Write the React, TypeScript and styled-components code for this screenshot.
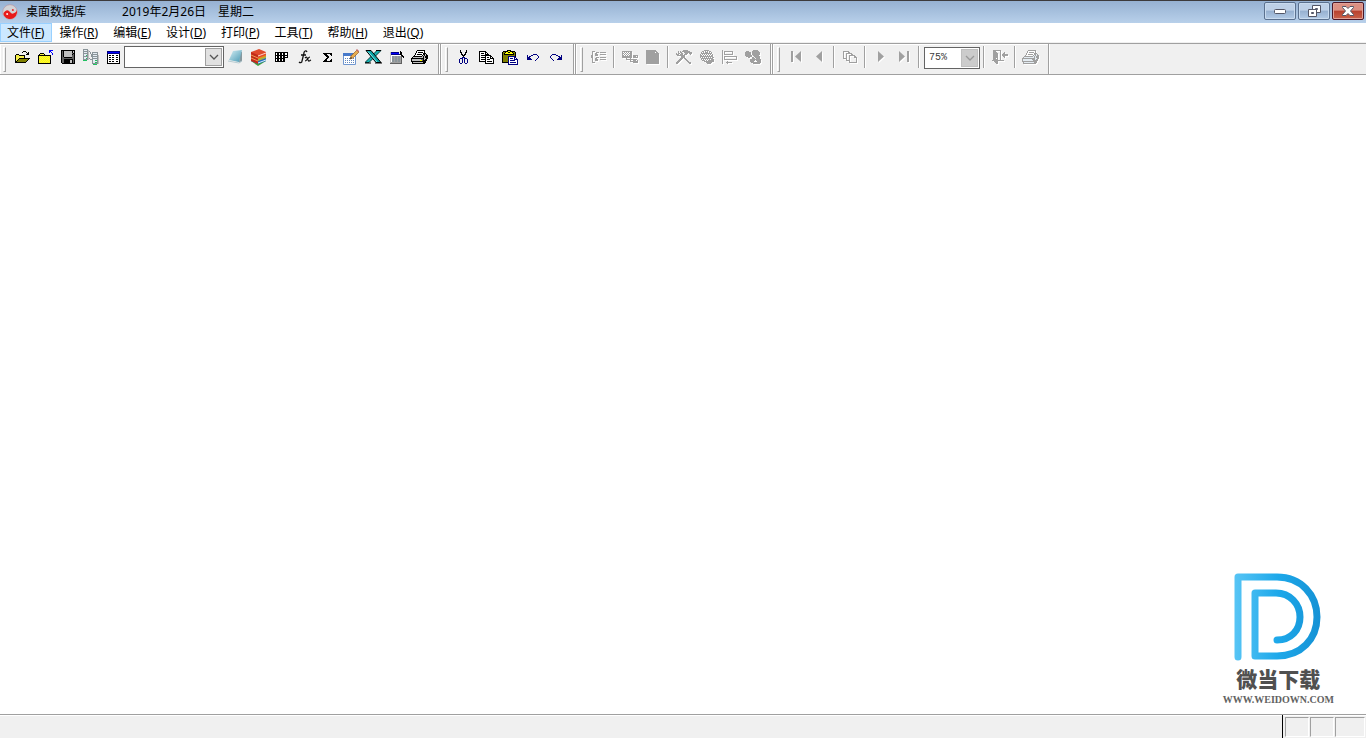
import React from "react";
import styled, { createGlobalStyle, css } from "styled-components";

const GlobalStyle = createGlobalStyle`
  *, *::before, *::after { box-sizing: border-box; }
  body {
    margin: 0;
    background: #fff;
    color: #000;
    font: 12px/18px "Noto Sans", "Noto Sans CJK SC", sans-serif;
  }
  button, select, input { font: inherit; color: inherit; margin: 0; padding: 0; }
`;

const Window = styled.div`
  display: flex;
  flex-direction: column;
  min-height: 100vh;
`;

const TitleBar = styled.header`
  display: flex;
  align-items: flex-start;
  height: 23px;
  padding: 1px 2px 0;
  border-top: 1px solid #3c3a3c;
  background: linear-gradient(#96b1d2, #b8d0ea);
`;

const Title = styled.h1`
  display: flex;
  flex: 1;
  gap: 12px;
  margin: 0;
  padding-left: 8px;
  font-size: 12px;
  font-weight: 400;
  line-height: 19px;
`;

const AppName = styled.span`
  margin-right: 24px;
`;

const WindowButtons = styled.div`
  display: flex;
  gap: 2px;
`;

const WindowButton = styled.button<{ $danger?: boolean }>`
  display: grid;
  place-items: center;
  width: 32px;
  height: 18px;
  border: 1px solid ${(p) => (p.$danger ? "#4c1626" : "#5b718f")};
  border-radius: 2px;
  box-shadow: inset 0 0 0 1px ${(p) => (p.$danger ? "#e0a198" : "#c9dbef")};
  background: ${(p) =>
    p.$danger
      ? "linear-gradient(#dc9083 0 45%, #b8412e 50%, #c9624a)"
      : "linear-gradient(#bdd0e7 0 45%, #96b0d0 50%, #b3cbe6)"};
`;

const MenuBar = styled.nav`
  display: flex;
  height: 20px;
  background: #fff;
  border-bottom: 1px solid #f0f0f0;
`;

const MenuItem = styled.button<{ $active?: boolean }>`
  height: 19px;
  padding: 0 7px 0 6px;
  border: 1px solid ${(p) => (p.$active ? "#99d1ff" : "transparent")};
  background: ${(p) => (p.$active ? "#cce8ff" : "transparent")};
  line-height: 18px;
  white-space: nowrap;
`;

const ToolBars = styled.div`
  display: flex;
  gap: 1px;
  height: 32px;
  border-top: 1px solid #a0a0a0;
  border-bottom: 1px solid #a0a0a0;
  background: #f0f0f0;
`;

const ToolGroup = styled.div<{ $first?: boolean }>`
  display: flex;
  align-items: flex-start;
  padding: ${(p) => (p.$first ? "2px 7px 0 3px" : "2px 6px 0 4px")};
  border: solid #a0a0a0;
  border-width: 0 1px 0 ${(p) => (p.$first ? "0" : "1px")};
  box-shadow: inset 1px 1px 0 #fff, 1px 0 0 #fff;
`;

const Grip = styled.span`
  width: 3px;
  height: 25px;
  margin: 1px 4px 0 0;
  border: 1px solid;
  border-color: #fff #a0a0a0 #a0a0a0 #fff;
`;

const Separator = styled.span`
  width: 2px;
  height: 22px;
  margin: 0 3px;
  border-left: 1px solid #a0a0a0;
  border-right: 1px solid #fff;
`;

const ToolButton = styled.button`
  display: grid;
  place-items: center;
  width: 23px;
  height: 22px;
  border: 0;
  background: none;
  &:disabled svg {
    filter: drop-shadow(1px 1px 0 #fff);
  }
`;

const Combo = styled.label<{ $zoom?: boolean }>`
  display: flex;
  align-items: center;
  width: ${(p) => (p.$zoom ? "56px" : "100px")};
  height: 22px;
  margin: 0 0 0 ${(p) => (p.$zoom ? "1px" : "-1px")};
  padding: 1px;
  border: 1px solid #646464;
  background: #fff;
  ${(p) =>
    p.$zoom &&
    css`
      margin-top: 1px;
    `}
`;

const ComboSelect = styled.select`
  flex: 1;
  min-width: 0;
  height: 18px;
  padding-left: 3px;
  border: 0;
  appearance: none;
  background: transparent;
  font: 10px/18px "Liberation Mono", monospace;
  color: #3c3c3c;
  opacity: 1;
`;

const ComboArrow = styled.span<{ $disabled?: boolean }>`
  display: grid;
  place-items: center;
  width: 17px;
  height: 18px;
  border: 1px solid ${(p) => (p.$disabled ? "#bfbfbf" : "#a0a0a0")};
  background: ${(p) => (p.$disabled ? "#cccccc" : "#e1e1e1")};
  color: ${(p) => (p.$disabled ? "#999" : "#555")};
`;

const Workspace = styled.main`
  display: flex;
  flex: 1;
  align-items: flex-end;
  justify-content: flex-end;
  padding: 0 32px 7px;
`;

const Brand = styled.figure`
  display: flex;
  flex-direction: column;
  align-items: center;
  margin: 0;
  color: #505050;
`;

const BrandName = styled.strong`
  margin-top: 5px;
  font: 900 21px/24px "Noto Sans CJK SC", sans-serif;
`;

const BrandUrl = styled.span`
  margin-top: 3px;
  font: 700 10px/14px "Liberation Serif", serif;
  color: #626262;
`;

const StatusBar = styled.footer`
  display: flex;
  height: 24px;
  border-top: 1px solid #a0a0a0;
  background: #f0f0f0;
  box-shadow: inset 0 1px 0 #fff;
`;

const StatusText = styled.div`
  flex: 1;
  border-right: 1px solid #000;
`;

const StatusCells = styled.div`
  display: flex;
  gap: 1px;
  padding: 2px 1px 1px 2px;
`;

const StatusCell = styled.div<{ $wide?: boolean }>`
  width: ${(p) => (p.$wide ? "30px" : "24px")};
  border: 1px solid;
  border-color: #a0a0a0 #fff #fff #a0a0a0;
`;

const PALETTE: Record<string, string> = {
  k: "#000000",
  w: "#ffffff",
  y: "#f5ee4a",
  Y: "#ffff00",
  o: "#808000",
  b: "#0000ff",
  n: "#000080",
  g: "#a0a0a0",
  s: "#c0c0c0",
  l: "#e4ecf2",
  m: "#8a9499",
  e: "#20c060",
  d: "#606060",
};

/* Draws an icon from rows of one-letter colours; a dot is transparent. */
function Pixels({ rows }: { rows: string[] }) {
  const w = Math.max(...rows.map((r) => r.length));
  const runs: React.ReactElement[] = [];
  rows.forEach((row, y) => {
    for (let x = 0; x < row.length; ) {
      let end = x + 1;
      while (end < row.length && row[end] === row[x]) end++;
      if (PALETTE[row[x]])
        runs.push(<rect key={`${x}-${y}`} x={x} y={y} width={end - x} height={1} fill={PALETTE[row[x]]} />);
      x = end;
    }
  });
  return (
    <svg width={w} height={rows.length} shapeRendering="crispEdges" aria-hidden="true">
      {runs}
    </svg>
  );
}

const OPEN = [
  ".........kkk....",
  "........k...k.k.",
  ".............kk.",
  "..kkk.......kkk.",
  ".kyyykkkkkk.....",
  ".kyyyyyyyyk.....",
  ".kyyyyyyyyk.....",
  ".kyyykkkkkkkkkkk",
  ".kyykoooooooook.",
  ".kykoooooooook..",
  ".kkoooooooook...",
  ".kkkkkkkkkkk....",
];
const FOLDER_UP = [
  "............bbbb",
  "............bb..",
  "............b.b.",
  "...kkkk........b",
  "..kyyyyk.......b",
  ".kkkkkkkkkkkkk..",
  ".kYyYyYyYyYyYk..",
  ".kyYyYyYyYyYyk..",
  ".kYyYyYyYyYyYk..",
  ".kyYyYyYyYyYyk..",
  ".kYyYyYyYyYyYk..",
  ".kyYyYyYyYyYyk..",
  ".kYyYyYyYyYyYk..",
  ".kkkkkkkkkkkkk..",
];
const SAVE = [
  "kkkkkkkkkkkkkk",
  "kdkssssssssksk",
  "kdkssssssssksk",
  "kdkssssssssdkk",
  "kdksssssssskdk",
  "kdkssssssssddk",
  "kdkssssssssddk",
  "kddkkkkkkkkddk",
  "kddddddddddddk",
  "kddkkkkkkkkkdk",
  "kddkkkkkksskdk",
  "kddkkkkkksskdk",
  "kddkkkkkksskdk",
  ".kkkkkkkkkkkkk",
];
const SERVERS = [
  "mmmmm...........",
  "mlllms..........",
  "mmmmmsm.........",
  "mlllms.m.mmmmmm.",
  "mmmmms.m.mllllm.",
  "mlllms..mmmmmmm.",
  "mllems..mmllllms",
  "mmmmms..mmmmmmms",
  "mlllms...mllllms",
  "mllemsm..mmmmmms",
  "mmmmms.mmmllllms",
  "eeee.....mlleems",
  ".........mllllms",
  ".........mlleems",
  ".........mmmmmms",
  "..........eeee..",
];
const SHEET = [
  "nnnnnnnnnnnnn",
  "nbbbbbbbbbbbn",
  "nnnnnnnnnnnnn",
  "kwwwwwwwwwwwk",
  "kwkkwkkwwkkwk",
  "kwwwwwwwwwwwk",
  "kwkkwkkwwkkwk",
  "kwwwwwwwwwwwk",
  "kwkkwkkwwkkwk",
  "kwwwwwwwwwwwk",
  "kwkkwkkwwkkwk",
  "kwwwwwwwwwwwk",
  "kkkkkkkkkkkkk",
];
const GRID = [
  "kkkkkkkkkkkkk",
  "kwkkwkkwkkwwk",
  "kwkkwkkwkkwwk",
  "kkkkkkkkkkkkk",
  "kwkkwkkwkkwwk",
  "kwkkwkkwkkkkk",
  "kkkkkkkkkk...",
  "kwkkwkkwkk...",
  "kwkkwkkwkk...",
  "kkkkkkkkkk...",
];
const SIGMA = [
  "kkkkkkkkk",
  ".kkk...kk",
  "..kkk...k",
  "...kkk...",
  "....kk...",
  "...kk....",
  "..kk....k",
  ".kkk...kk",
  "kkkkkkkkk",
];
const TABLE_WIZARD = [
  "..........k...",
  "snnnnnnnn.kk..",
  "sbbbbbbbb.kk..",
  "snnnnnnnnnkk..",
  "swwwwwwwwwwkk.",
  "swmmgmmgmmgdkk",
  "swmmgmmgmmgd.k",
  "swmmgmmgmmgd..",
  "swmmgmmgmmgd..",
  "swmmgmmgmmgd..",
  "swmmgmmgmmgd..",
  "sggggggggggd..",
  "dddddddddddd..",
];
const PRINTER = [
  "......kkkkkkkk...",
  ".....kwwwwwwwk...",
  ".....kwkkkkkwk...",
  "....kwwwwwwwkkk..",
  "....kwkkkkkwkksk.",
  "...kwwwwwwwkskskk",
  "..kkkkkkkkkskskkk",
  ".ksssssssssskskkk",
  "kkkkkkkkkkkkksskk",
  "ksssssssssddkskk.",
  "kssssssssYYdkkkk.",
  "kkkkkkkkkkkkkkk..",
  ".ksssssssssskkk..",
  ".kkkkkkkkkkkkk...",
];
const CUT = [
  "..k.....k..",
  "..k.....k..",
  "..kk...kk..",
  "...k...k...",
  "...kk.kk...",
  "....kkk....",
  ".....k.....",
  "....nnn....",
  "..nnn.nnn..",
  ".n..n.n..n.",
  ".n..n.n..n.",
  ".n..n.n..n.",
  ".n..n.n..n.",
  "..nn...nn..",
];
const COPY = [
  "kkkkkkk.........",
  "kwwwwwkk........",
  "kwkkkwkwk.......",
  "kwwwwwkkkk......",
  "kwkkkkkkkkkk....",
  "kwwwwwkwwwwkk...",
  "kwkkkkkwkkwkwk..",
  "kwwwwwkwwwwkkkk.",
  "kwkkkkkwkkkwwwk.",
  "kwwwwwkwwwwwwwk.",
  "kkkkkkkwkkkkkwk.",
  "......kwwwwwwwk.",
  "......kkkkkkkkk.",
];
const PASTE = [
  ".....kkkk.......",
  ".kkkkkYYkkkkk...",
  "kookYYkkYYkook..",
  "kokYYYYYYYYkok..",
  "kokkkkkkkkkkok..",
  "kooooooooooook..",
  "kooooonnnnnnnk..",
  "kooooonwwwwwnn..",
  "kooooonwnnnwnwn.",
  "kooooonwwwwwnnnn",
  "kooooonwnnnnnwwn",
  "kooooonwwwwwwwwn",
  "kkkkkknwnnnnnnwn",
  "......nwwwwwwwwn",
  "......nnnnnnnnnn",
];
const UNDO = [
  "......nnnn..",
  "n...nn....n.",
  "n.nn.......n",
  "nnn........n",
  "nnnn......n.",
  "nnnnn....n..",
  "........n...",
];
const REDO = UNDO.map((row) => [...row].reverse().join(""));
const TREE = [
  ".ggg...........",
  ".g...ggg.gggggg",
  ".g..gg.........",
  ".g..ggg..gggggg",
  "gg..ggg........",
  "gg.............",
  "gg...ggg.gggggg",
  ".g..gg.........",
  ".g..ggg..gggggg",
  ".g..ggg........",
  ".g.............",
  ".ggg...........",
];
const FIELDS = [
  "gggggggggg......",
  "gwgwgwgwgg......",
  "ggwgwgwggg......",
  "gwgwgwgwgg......",
  "ggwgwgwggg.ggggg",
  "gggggggggg.gggwg",
  "gggggggggg.ggggg",
  "....g...g.......",
  "....ggggggggggg.",
  "........g..gggwg",
  "........gggggggg",
  "...........ggggg",
];
const PAGE = [
  "gggggggggg...",
  "ggggggggggg..",
  "ggggggggg.gg.",
  "ggggggggggggg",
  "ggggggggggggg",
  "ggggggggggggg",
  "ggggggggggggg",
  "ggggggggggggg",
  "ggggggggggggg",
  "ggggggggggggg",
  "ggggggggggggg",
  "ggggggggggggg",
  "ggggggggggggg",
  "ggggggggggggg",
];
const TOOLS = [
  ".......ggggg....",
  "..g.g.gggggggg..",
  "..g.gg..gggggggg",
  "g.gg.gg..ggg.ggg",
  "ggg.ggg.ggg...g.",
  ".gggggggg.......",
  ".....gggg.......",
  ".....gggg.......",
  "....ggg.gg......",
  "...ggg...gg.....",
  "..ggg.....gg....",
  ".ggg.......gg...",
  "ggg.........ggg.",
  "gg...........gg.",
];
const GLOBE = [
  "....ggggg.....",
  "..ggwgwgwgg...",
  ".gwgwgggwgwg..",
  ".ggggggggggg..",
  "gwgwgwgwgwgwg.",
  "ggwgwgwgwgwgg.",
  "ggggggggggggg.",
  "gwgwgwgwgwgwgg",
  ".gggggggggggg.",
  ".gwgwgwgwgwggg",
  "..gggwgwgggggg",
  "....gggggggggg",
  "......gggggg..",
  ".......gggg...",
];
const ALIGN = [
  "g..............",
  "g.ggggggggg....",
  "g.g.......g....",
  "g.g.......g....",
  "g.ggggggggg....",
  "g..............",
  "g.ggggggggggggg",
  "g.g...........g",
  "g.g...........g",
  "g.ggggggggggggg",
  "g..............",
  "g....g.........",
  "g...gggggg.....",
  "g....g.........",
];
const SHAPES = [
  "........ggggg...",
  ".ggg...ggggggg..",
  "gggggg.gggggggg.",
  "gggggg.gggggggg.",
  "gggggg.gggggggg.",
  "ggggggg.gggggg..",
  ".gggggg..gggggg.",
  "...gg..gg.ggggg.",
  ".......ggg.gggg.",
  ".....ggggggggggg",
  ".....gggggwggggg",
  ".....ggggwwwgggg",
  "......gggggggggg",
  "........ggggggg.",
];
const PAGES = [
  "gggggg........",
  "g....gg.......",
  "g..gggggg.....",
  "g..g....gg....",
  "g..g..gggggg..",
  "g..g..g....gg.",
  "g..g..g....ggg",
  "gggg..g......g",
  "...g..g......g",
  "...gggg......g",
  "......g......g",
  "......gggggggg",
];
const DOOR = [
  ".gggggggg.......",
  ".ggg....g.......",
  ".gggg...g...g...",
  ".ggggg..g..gg...",
  ".ggggg..g.gggggg",
  ".ggggg..g.gggggg",
  ".ggggg..g..gg...",
  ".ggggg..g...g...",
  ".ggg.g..g.......",
  ".ggggg..g.......",
  "gggggggggggg....",
  "..gggg..........",
  "...ggg..........",
  "....gg..........",
];
const PRINTER_OFF = PRINTER.map((row) => row.replace(/[kd]/g, "g").replace(/[sY]/g, "l"));

const Nav = ({ flip, bar }: { flip?: boolean; bar?: boolean }) => (
  <svg width="12" height="12" fill="#a0a0a0" aria-hidden="true">
    <g transform={flip ? "matrix(-1 0 0 1 12 0)" : undefined}>
      <path d={bar ? "M1 0v11l6-5.500z" : "M3 0v11l6-5.500z"} />
      {bar && <path d="M9 0h2v11h-2z" />}
    </g>
  </svg>
);

const Notebook = () => (
  <svg width="16" height="16" aria-hidden="true">
    <defs>
      <linearGradient id="note" x1="0" y1="0" x2="1" y2="1">
        <stop offset="0" stopColor="#d5eef4" />
        <stop offset="1" stopColor="#4899b4" />
      </linearGradient>
    </defs>
    <path d="M12 2l2 1v9l-3 2z" fill="#85989f" />
    <path d="M5 2l9-1-3 12-10-2z" fill="url(#note)" />
    <path d="M0 12l11 2 3-2" fill="none" stroke="#b8ccd2" />
  </svg>
);

const Books = () => (
  <svg width="17" height="17" aria-hidden="true">
    <path d="M1 12l7-2 8 2-8 5z" fill="#3ca040" />
    <path d="M1 9l7-2 8 2v3l-8 3-7-3z" fill="#236fc0" />
    <path d="M2 11l6 3 8-3" fill="none" stroke="#d9eefa" />
    <path d="M1 6l8-2 7 2v3l-8 3-7-3z" fill="#ed8a19" />
    <path d="M8 11l8-3" fill="none" stroke="#7bc95c" />
    <path d="M1 3l8-3 7 3v3l-8 3-7-3z" fill="#e0492c" />
    <path d="M8 7l8-3" stroke="#ffd2c5" />
    <path d="M1 3l7 3v9l-7-3z" fill="#c22a1a" />
    <path d="M1 6l7 3M1 9l7 3" stroke="#ef9a50" />
  </svg>
);

const Fx = () => (
  <svg width="14" height="14" fill="none" stroke="#111" aria-hidden="true">
    <path d="M9 2c-1-2-3-1-3 1l-2 8c0 2-2 2-3 1M3 5h5" strokeWidth="1.300" />
    <path d="M7 8c2-2 2 0 3 2s1 1 3 0M12 7c-2 0-3 4-5 4" strokeWidth="1.200" />
  </svg>
);

const EditTable = () => (
  <svg width="16" height="16" aria-hidden="true">
    <path d="M.5 4.500h12v11h-12z" fill="#fff" stroke="#7097d0" />
    <path d="M0 4h13v3h-13z" fill="#4779ca" />
    <path d="M2 9.500h10M2 11.500h10M2 13.500h10" stroke="#6287bc" strokeDasharray="1 1" />
    <path d="M7 10l1-3 6-6 2 2-6 6z" fill="#e7ad50" stroke="#93602c" strokeWidth=".7" />
    <path d="M13 1l1-1 2 2-1 1z" fill="#c46868" />
    <path d="M7 10l1-2 1 1z" fill="#222" />
  </svg>
);

const Excel = () => (
  <svg width="17" height="14" aria-hidden="true">
    <path d="M12 .5h4l-12 12h-4z" fill="#16b4b4" stroke="#053f3f" />
    <path d="M1 .5h5l10 12h-5z" fill="#08a0a2" stroke="#000" />
    <path d="M3 1.500l9 10.500" stroke="#9ff" strokeWidth=".8" />
    <path d="M0 13h6M10 13h7M11 .5h5" stroke="#000" />
  </svg>
);

const Chevron = () => (
  <svg width="10" height="6" fill="none" stroke="currentColor" strokeWidth="1.300" aria-hidden="true">
    <path d="M1 1l4 4 4-4" />
  </svg>
);

const AppIcon = () => (
  <svg width="16" height="19" aria-hidden="true">
    <circle cx="8" cy="10" r="7.300" fill="#d3d3d6" stroke="#b98f98" strokeWidth=".6" />
    <g transform="rotate(55 8 10)">
      <path d="M8 3a7 7 0 0 1 0 14a3.500 3.500 0 0 1 0-7a3.500 3.500 0 0 0 0-7z" fill="#e81a1a" />
      <circle cx="8" cy="6.500" r="1" fill="#e81a1a" />
      <circle cx="8" cy="13.500" r="1" fill="#fff" />
    </g>
  </svg>
);

const BrandLogo = () => (
  <svg width="88" height="88" fill="none" stroke="url(#brand)" strokeWidth="7" strokeLinecap="round" strokeLinejoin="round" aria-hidden="true">
    <defs>
      <linearGradient id="brand" gradientUnits="userSpaceOnUse" x1="0" y1="0" x2="88" y2="0">
        <stop offset="0" stopColor="#58c5f5" />
        <stop offset=".5" stopColor="#1da8ea" />
        <stop offset="1" stopColor="#1591d4" />
      </linearGradient>
    </defs>
    <path d="M4 84V4H43C67 4 83 22 83 44S67 83 43 83H21V20H42C56 20 66 31 66 44S57 67 43 67" />
  </svg>
);

const MENUS: [string, string][] = [
  ["文件", "F"],
  ["操作", "R"],
  ["编辑", "E"],
  ["设计", "D"],
  ["打印", "P"],
  ["工具", "T"],
  ["帮助", "H"],
  ["退出", "Q"],
];

function Tool({ label, off, children }: { label: string; off?: boolean; children: React.ReactNode }) {
  return (
    <ToolButton type="button" aria-label={label} disabled={off}>
      {children}
    </ToolButton>
  );
}

export default function App() {
  return (
    <Window>
      <GlobalStyle />
      <TitleBar>
        <AppIcon />
        <Title>
          <AppName>桌面数据库</AppName>
          <span>2019年2月26日</span>
          <span>星期二</span>
        </Title>
        <WindowButtons>
          <WindowButton type="button" aria-label="最小化">
            <svg width="12" height="6" aria-hidden="true">
              <rect x=".5" y="1.500" width="11" height="4" rx="1" fill="#fff" stroke="#535666" />
            </svg>
          </WindowButton>
          <WindowButton type="button" aria-label="还原">
            <svg width="13" height="12" fill="#fff" stroke="#535666" fillRule="evenodd" aria-hidden="true">
              <path d="M4.500 .5h8v7h-8zM7.500 3.500h2v1h-2z" />
              <path d="M.5 4.500h8v7h-8zM3.500 7.500h2v1h-2z" />
            </svg>
          </WindowButton>
          <WindowButton type="button" aria-label="关闭" $danger>
            <svg width="12" height="10" aria-hidden="true">
              <path d="M.5 .5h3.500l2 2 2-2h3.500v1l-3 3.500 3 3.500v1h-3.500l-2-2-2 2h-3.500v-1l3-3.500-3-3.500z" fill="#fff" stroke="#535666" />
            </svg>
          </WindowButton>
        </WindowButtons>
      </TitleBar>

      <MenuBar>
        {MENUS.map(([name, key], i) => (
          <MenuItem key={key} type="button" $active={i === 0}>
            {name}(<u>{key}</u>)
          </MenuItem>
        ))}
      </MenuBar>

      <ToolBars>
        <ToolGroup $first>
          <Grip />
          <Tool label="打开"><Pixels rows={OPEN} /></Tool>
          <Tool label="关闭文件夹"><Pixels rows={FOLDER_UP} /></Tool>
          <Tool label="保存"><Pixels rows={SAVE} /></Tool>
          <Tool label="连接"><Pixels rows={SERVERS} /></Tool>
          <Tool label="表"><Pixels rows={SHEET} /></Tool>
          <Combo>
            <ComboSelect aria-label="数据表" defaultValue="">
              <option value="" />
            </ComboSelect>
            <ComboArrow><Chevron /></ComboArrow>
          </Combo>
          <Tool label="记事本"><Notebook /></Tool>
          <Tool label="资料"><Books /></Tool>
          <Tool label="网格"><Pixels rows={GRID} /></Tool>
          <Tool label="函数"><Fx /></Tool>
          <Tool label="求和"><Pixels rows={SIGMA} /></Tool>
          <Tool label="编辑表"><EditTable /></Tool>
          <Tool label="导出"><Excel /></Tool>
          <Tool label="向导"><Pixels rows={TABLE_WIZARD} /></Tool>
          <Tool label="打印"><Pixels rows={PRINTER} /></Tool>
        </ToolGroup>

        <ToolGroup>
          <Grip />
          <Tool label="剪切"><Pixels rows={CUT} /></Tool>
          <Tool label="复制"><Pixels rows={COPY} /></Tool>
          <Tool label="粘贴"><Pixels rows={PASTE} /></Tool>
          <Tool label="撤消"><Pixels rows={UNDO} /></Tool>
          <Tool label="重做"><Pixels rows={REDO} /></Tool>
        </ToolGroup>

        <ToolGroup>
          <Grip />
          <Tool label="结构" off><Pixels rows={TREE} /></Tool>
          <Separator />
          <Tool label="字段" off><Pixels rows={FIELDS} /></Tool>
          <Tool label="页面" off><Pixels rows={PAGE} /></Tool>
          <Separator />
          <Tool label="工具" off><Pixels rows={TOOLS} /></Tool>
          <Tool label="颜色" off><Pixels rows={GLOBE} /></Tool>
          <Tool label="对齐" off><Pixels rows={ALIGN} /></Tool>
          <Tool label="图形" off><Pixels rows={SHAPES} /></Tool>
        </ToolGroup>

        <ToolGroup>
          <Grip />
          <Tool label="首页" off><Nav bar flip /></Tool>
          <Tool label="上一页" off><Nav flip /></Tool>
          <Separator />
          <Tool label="多页" off><Pixels rows={PAGES} /></Tool>
          <Separator />
          <Tool label="下一页" off><Nav /></Tool>
          <Tool label="末页" off><Nav bar /></Tool>
          <Separator />
          <Combo $zoom>
            <ComboSelect aria-label="缩放" defaultValue="75%" disabled>
              <option>75%</option>
            </ComboSelect>
            <ComboArrow $disabled><Chevron /></ComboArrow>
          </Combo>
          <Separator />
          <Tool label="关闭预览" off><Pixels rows={DOOR} /></Tool>
          <Separator />
          <Tool label="打印预览" off><Pixels rows={PRINTER_OFF} /></Tool>
        </ToolGroup>
      </ToolBars>

      <Workspace>
        <Brand>
          <BrandLogo />
          <BrandName>微当下载</BrandName>
          <BrandUrl>WWW.WEIDOWN.COM</BrandUrl>
        </Brand>
      </Workspace>

      <StatusBar>
        <StatusText />
        <StatusCells>
          <StatusCell />
          <StatusCell />
          <StatusCell $wide />
        </StatusCells>
      </StatusBar>
    </Window>
  );
}
